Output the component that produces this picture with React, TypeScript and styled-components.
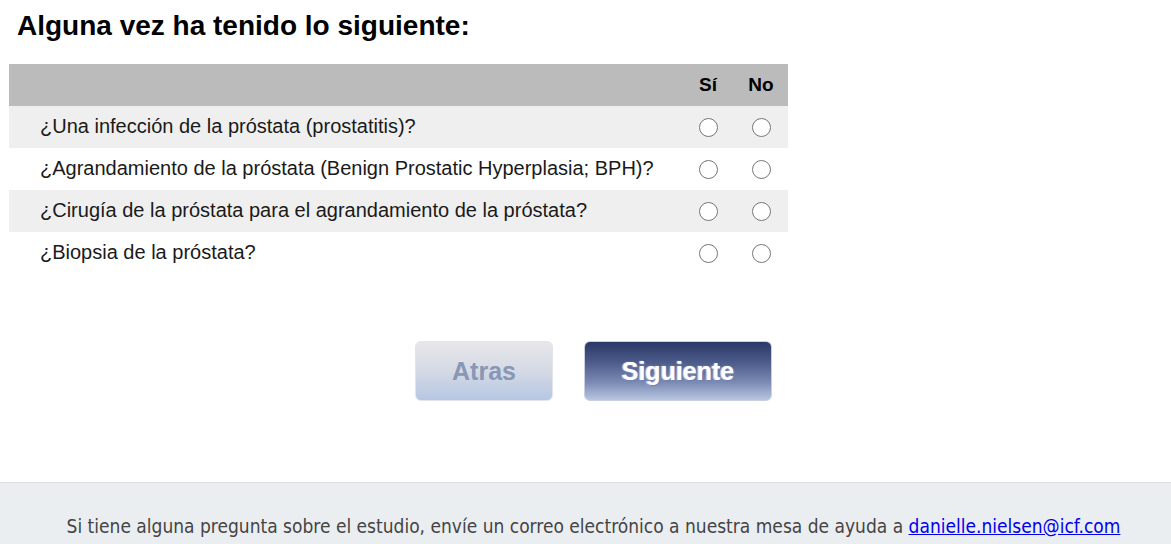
import React from 'react';
import styled, { createGlobalStyle } from 'styled-components';

const GlobalStyle = createGlobalStyle`
  html, body {
    margin: 0;
    padding: 0;
    background: #ffffff;
    font-family: "Liberation Sans", Arial, sans-serif;
  }
`;

const Page = styled.div`
  width: 1171px;
  display: flex;
  flex-direction: column;
`;

const Main = styled.div`
  padding: 0 0 0 9px;
  height: 482px;
  display: flex;
  flex-direction: column;
`;

const Title = styled.h2`
  margin: 0;
  padding: 10px 0 0 8px;
  height: 64px;
  box-sizing: border-box;
  font: bold 28px "Liberation Sans", Arial, sans-serif;
  color: #000;
`;

const Table = styled.table`
  width: 779px;
  border-collapse: collapse;
`;

const HeadRow = styled.tr`
  background: #bbbbbb;
  height: 42px;
`;

const HeadCell = styled.th<{ $w?: number }>`
  font: bold 19px "Liberation Sans", Arial, sans-serif;
  color: #000;
  text-align: center;
  padding: 0;
  width: ${(p) => (p.$w ? `${p.$w}px` : 'auto')};
`;

const Row = styled.tr<{ $odd: boolean }>`
  background: ${(p) => (p.$odd ? '#efefef' : '#ffffff')};
  height: 42px;
`;

const Question = styled.td`
  font: 20px "Liberation Sans", Arial, sans-serif;
  color: #1a1a1a;
  padding: 0 0 1px 31px;
`;

const RadioCell = styled.td`
  text-align: center;
  padding: 0;
  vertical-align: middle;
`;

const Radio = styled.input`
  appearance: none;
  margin: 0;
  width: 19px;
  height: 19px;
  border: 1.5px solid #767676;
  border-radius: 50%;
  background: #fff;
  vertical-align: middle;
  box-sizing: border-box;
`;

const Buttons = styled.div`
  display: flex;
  gap: 31px;
  padding: 67px 0 0 406px;
`;

const Button = styled.button<{ $primary?: boolean }>`
  height: 60px;
  width: ${(p) => (p.$primary ? '188px' : '138px')};
  border-radius: 6px;
  border: 1px solid ${(p) => (p.$primary ? '#c8d0e0' : '#e2e4ea')};
  background: ${(p) =>
    p.$primary
      ? 'linear-gradient(to bottom, #2a3868 0%, #4d5b8a 35%, #7c8bb4 70%, #b8c6e2 100%)'
      : 'linear-gradient(to bottom, #e8e8eb 0%, #d4d9e4 50%, #b6c7e3 100%)'};
  color: ${(p) => (p.$primary ? '#ffffff' : '#8797b5')};
  font: bold 25px "Liberation Sans", Arial, sans-serif;
  text-shadow: ${(p) =>
    p.$primary ? '1px 1px 1px #7080b0, -1px 0 1px #d0d8ff' : 'none'};
  padding: 0;
  cursor: pointer;
`;

const Footer = styled.footer`
  border-top: 1px solid #dde1e6;
  background: #ebeef1;
  height: 80px;
  display: flex;
  justify-content: center;
  padding: 32px 0 0 16px;
  box-sizing: border-box;
  font: 19px "DejaVu Sans Condensed", "DejaVu Sans", Tahoma, sans-serif;
  color: #444;
`;

const Mail = styled.a`
  color: #0000ee;
`;

const questions = [
  '¿Una infección de la próstata (prostatitis)?',
  '¿Agrandamiento de la próstata (Benign Prostatic Hyperplasia; BPH)?',
  '¿Cirugía de la próstata para el agrandamiento de la próstata?',
  '¿Biopsia de la próstata?',
];

export default function App() {
  return (
    <Page>
      <GlobalStyle />
      <Main>
        <Title>Alguna vez ha tenido lo siguiente:</Title>
        <Table>
          <thead>
            <HeadRow>
              <HeadCell />
              <HeadCell $w={52}>Sí</HeadCell>
              <HeadCell $w={54}>No</HeadCell>
            </HeadRow>
          </thead>
          <tbody>
            {questions.map((q, i) => (
              <Row key={i} $odd={i % 2 === 0}>
                <Question>{q}</Question>
                <RadioCell>
                  <Radio type="radio" name={`q${i}`} />
                </RadioCell>
                <RadioCell>
                  <Radio type="radio" name={`q${i}`} />
                </RadioCell>
              </Row>
            ))}
          </tbody>
        </Table>
        <Buttons>
          <Button disabled>Atras</Button>
          <Button $primary>Siguiente</Button>
        </Buttons>
      </Main>
      <Footer>
        <span>
          Si tiene alguna pregunta sobre el estudio, envíe un correo electrónico a nuestra mesa de ayuda a{' '}
          <Mail href="#">danielle.nielsen@icf.com</Mail>
        </span>
      </Footer>
    </Page>
  );
}
